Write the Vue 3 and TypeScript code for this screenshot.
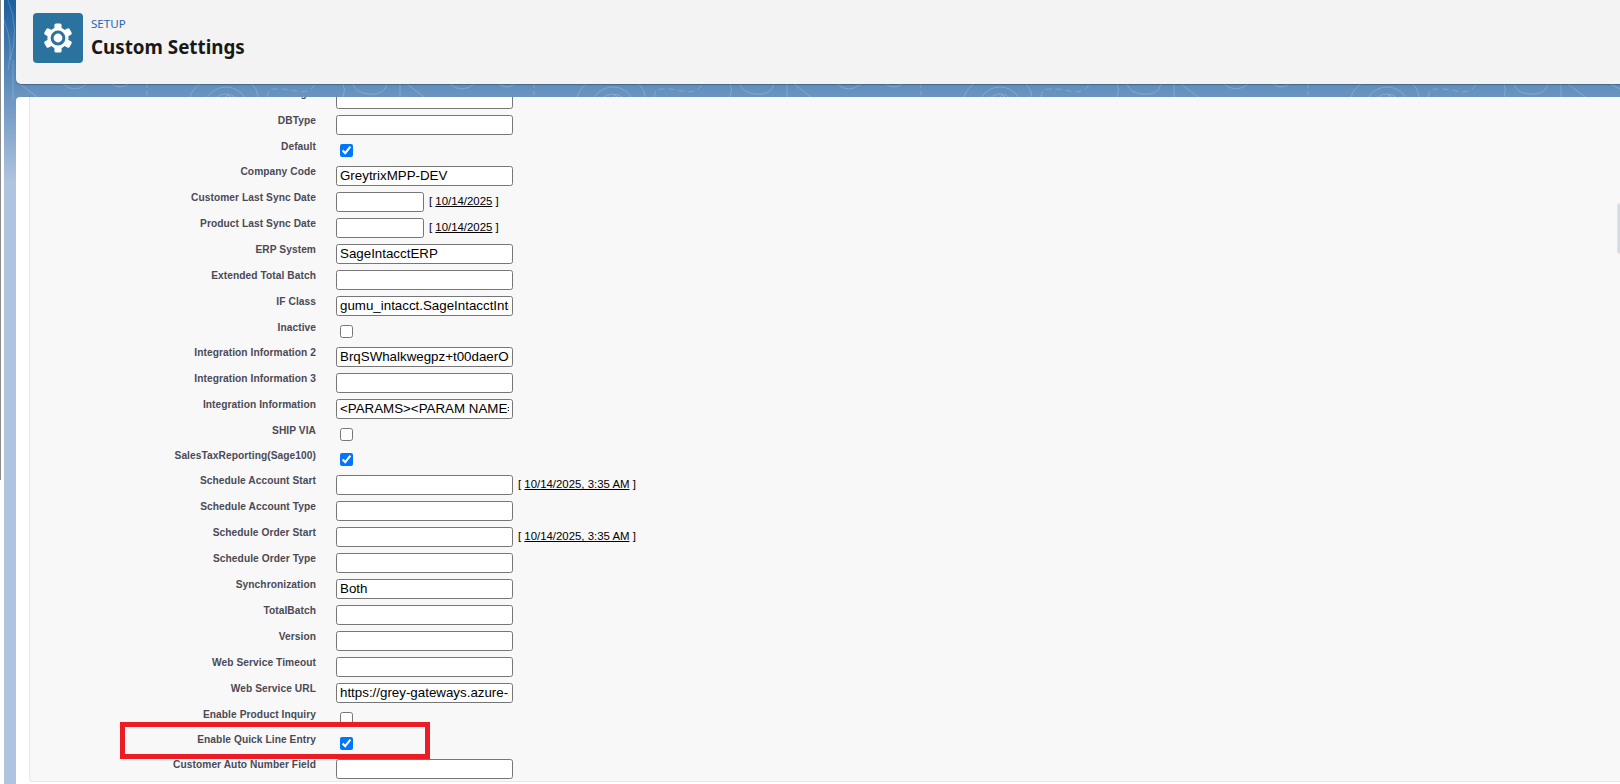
<script setup lang="ts">
interface Row {
  label: string
  kind: 'text' | 'check' | 'date'
  value?: string
  checked?: boolean
  stamp?: string
}

const rows: Row[] = [
  { label: 'DBLogin', kind: 'text' },
  { label: 'DBType', kind: 'text' },
  { label: 'Default', kind: 'check', checked: true },
  { label: 'Company Code', kind: 'text', value: 'GreytrixMPP-DEV' },
  { label: 'Customer Last Sync Date', kind: 'date', stamp: '10/14/2025' },
  { label: 'Product Last Sync Date', kind: 'date', stamp: '10/14/2025' },
  { label: 'ERP System', kind: 'text', value: 'SageIntacctERP' },
  { label: 'Extended Total Batch', kind: 'text' },
  { label: 'IF Class', kind: 'text', value: 'gumu_intacct.SageIntacctIntegration' },
  { label: 'Inactive', kind: 'check', checked: false },
  { label: 'Integration Information 2', kind: 'text', value: 'BrqSWhalkwegpz+t00daerOqlmVx' },
  { label: 'Integration Information 3', kind: 'text' },
  { label: 'Integration Information', kind: 'text', value: '<PARAMS><PARAM NAME="Company"' },
  { label: 'SHIP VIA', kind: 'check', checked: false },
  { label: 'SalesTaxReporting(Sage100)', kind: 'check', checked: true },
  { label: 'Schedule Account Start', kind: 'text', stamp: '10/14/2025, 3:35 AM' },
  { label: 'Schedule Account Type', kind: 'text' },
  { label: 'Schedule Order Start', kind: 'text', stamp: '10/14/2025, 3:35 AM' },
  { label: 'Schedule Order Type', kind: 'text' },
  { label: 'Synchronization', kind: 'text', value: 'Both' },
  { label: 'TotalBatch', kind: 'text' },
  { label: 'Version', kind: 'text' },
  { label: 'Web Service Timeout', kind: 'text' },
  { label: 'Web Service URL', kind: 'text', value: 'https://grey-gateways.azure-api.net/' },
  { label: 'Enable Product Inquiry', kind: 'check', checked: false },
  { label: 'Enable Quick Line Entry', kind: 'check', checked: true },
  { label: 'Customer Auto Number Field', kind: 'text' },
]

const teeth: number[] = [0, 60, 120, 180, 240, 300]
</script>

<template>
  <div class="page">
    <div class="edge"><div class="edge-bar"></div></div>
    <div class="stage">
      <svg class="topo" width="1620" height="120" aria-hidden="true">
        <defs>
          <pattern id="topo" x="0" y="0" width="387" height="120" patternUnits="userSpaceOnUse">
            <g fill="none" stroke="#ffffff" stroke-opacity="0.2" stroke-width="1">
              <path d="M13 60V100" />
              <path d="M20 84L37 97" />
              <path d="M63 84Q75 94 87 84" />
              <path d="M112 84Q120 90 128 84" />
              <path d="M147 84V97" stroke-dasharray="4 3" />
              <path d="M190 97Q193 88 200 84" />
              <circle cx="226" cy="109" r="22" />
              <circle cx="226" cy="109" r="15" />
              <path d="M215 97L222 101L228 95L236 102" />
              <path d="M252 84Q258 90 258 97" />
              <path d="M267 97L269 90Q280 87 300 92Q312 92 315 84" stroke-dasharray="6 4" />
              <path d="M343 84Q346 90 343 97" />
              <path d="M353 84Q356 93 368 94Q384 96 387 84" />
              <path d="M8 0Q20 30 10 60" />
              <path d="M4 20Q14 45 8 70" />
            </g>
          </pattern>
        </defs>
        <rect width="1620" height="120" fill="url(#topo)" />
      </svg>

      <header class="head">
        <div class="icon">
          <svg width="32" height="32" viewBox="-16 -16 32 32" aria-hidden="true">
            <rect
              v-for="a in teeth"
              :key="a"
              x="-3.6"
              y="-14.5"
              width="7.2"
              height="7"
              rx="1.6"
              fill="#fff"
              :transform="`rotate(${a})`"
            />
            <circle r="10.6" fill="#fff" />
            <circle r="7.4" fill="#2a739e" />
            <circle r="4.4" fill="#fff" />
          </svg>
        </div>
        <div class="titles">
          <div class="eyebrow">SETUP</div>
          <div class="title">Custom Settings</div>
        </div>
      </header>

      <main class="card">
        <div class="panel">
          <div class="form">
            <div v-for="r in rows" :key="r.label" class="row" :class="{ 'row-check': r.kind === 'check' }">
              <div class="label">{{ r.label }}</div>
              <div class="field">
                <input v-if="r.kind === 'check'" class="check" type="checkbox" :checked="r.checked" />
                <input v-else class="text" :class="{ short: r.kind === 'date' }" type="text" :value="r.value ?? ''" />
                <span v-if="r.stamp" class="stamp">[&nbsp;<a class="stamp-link">{{ r.stamp }}</a>&nbsp;]</span>
              </div>
            </div>
          </div>
        </div>
      </main>

      <div class="handle"></div>
    </div>
    <div class="callout"></div>
  </div>
</template>

<style>
html,
body {
  margin: 0;
  overflow: hidden;
  background: #fff;
}
</style>

<style scoped>
.page {
  position: relative;
  display: flex;
  width: 1620px;
  height: 784px;
  overflow: hidden;
  background: #fff;
}
.edge {
  flex: 0 0 4px;
  height: 100%;
}
.edge-bar {
  width: 1px;
  height: 480px;
  background: #8a8a8a;
}
.stage {
  position: relative;
  flex: 1;
  min-width: 0;
  height: 784px;
  padding-left: 12px;
  box-sizing: border-box;
  display: flex;
  flex-direction: column;
  background: linear-gradient(#1b5f9e 0, #b0c4df 182px);
}
.topo {
  position: absolute;
  left: -4px;
  top: 0;
}
.head {
  position: relative;
  flex: 0 0 84px;
  box-sizing: border-box;
  display: flex;
  align-items: flex-start;
  gap: 8px;
  padding: 13px 0 0 17px;
  margin-bottom: 13px;
  background: #f3f3f3;
  border-bottom-left-radius: 5px;
  box-shadow: 0 1px 1px rgba(0, 0, 0, 0.28);
}
.icon {
  width: 50px;
  height: 50px;
  border-radius: 4px;
  background: #2a739e;
  display: flex;
  align-items: center;
  justify-content: center;
}
.titles {
  display: flex;
  flex-direction: column;
  font-family: "Noto Sans", "Open Sans", sans-serif;
}
.eyebrow {
  margin-top: 3px;
  font-size: 11.6px;
  line-height: 15px;
  color: #1f66b3;
}
.title {
  margin-top: 4px;
  font-size: 18.8px;
  line-height: 24px;
  font-weight: 700;
  color: #181818;
}
.card {
  position: relative;
  flex: 1;
  min-height: 0;
  background: #fff;
  border-top-left-radius: 4px;
  padding: 0 0 2px 13px;
}
.panel {
  height: 100%;
  box-sizing: border-box;
  overflow: hidden;
  background: #f8f8f8;
  border-left: 1px solid #e8e8e8;
  border-bottom: 1px solid #e8e8e8;
  border-bottom-left-radius: 4px;
}
.form {
  margin-top: -8px;
}
.row {
  display: flex;
  height: 26px;
  gap: 20px;
}
.row-check {
  height: 25px;
}
.row:first-child .label {
  margin-top: -1px;
}
.label {
  flex: 0 0 286px;
  box-sizing: border-box;
  text-align: right;
  font-family: "Liberation Sans", Arial, sans-serif;
  font-size: 10.2px;
  letter-spacing: 0.07px;
  line-height: 11px;
  font-weight: 700;
  color: #4a4a56;
  white-space: nowrap;
}
.field {
  display: flex;
  align-items: flex-start;
  min-width: 0;
}
.text {
  width: 177px;
  height: 20px;
  box-sizing: border-box;
  margin: 0;
  padding: 0 3px 2px;
  border: 1px solid #767676;
  border-radius: 2.5px;
  background: #fff;
  color: #000;
  font-family: "Liberation Sans", Arial, sans-serif;
  font-size: 13.33px;
}
.short {
  width: 88px;
}
.check {
  width: 13px;
  height: 13px;
  margin: 3px 3px 3px 4px;
  accent-color: #0075ff;
}
.stamp {
  margin-left: 5px;
  margin-top: 2px;
  font-family: "Liberation Sans", Arial, sans-serif;
  font-size: 11.4px;
  line-height: 14px;
  color: #000;
  white-space: nowrap;
}
.stamp-link {
  color: #000;
  text-decoration: underline;
}
.handle {
  position: absolute;
  right: 0;
  top: 203px;
  width: 2px;
  height: 49px;
  background: #d3dbe4;
  border: 1px solid #e4e4e4;
  border-right: 0;
  border-radius: 3px 0 0 3px;
}
.callout {
  position: absolute;
  left: 120px;
  top: 722px;
  width: 310px;
  height: 37px;
  box-sizing: border-box;
  border: 5px solid #ed1c24;
  pointer-events: none;
}
</style>
